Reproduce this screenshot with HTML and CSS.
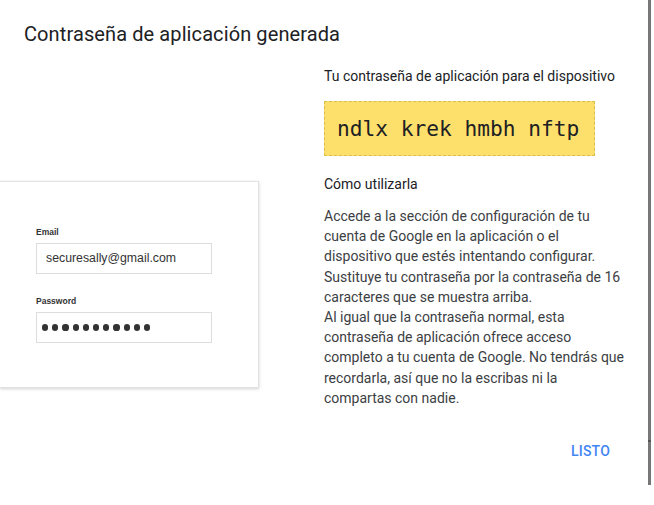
FILE: index.html
```html
<!DOCTYPE html>
<html lang="es">
<head>
<meta charset="utf-8">
<link rel="stylesheet" href="styles.css">
</head>
<body>
<div class="page">
  <div class="dialog">
    <h1 class="title">Contraseña de aplicación generada</h1>
    <div class="content">
      <div class="left">
        <div class="card">
          <div class="label">Email</div>
          <div class="field">securesally@gmail.com</div>
          <div class="label label-pw">Password</div>
          <div class="field dots" aria-label="contraseña oculta">
            <i></i><i></i><i></i><i></i><i></i><i></i><i></i><i></i><i></i><i></i><i></i>
          </div>
        </div>
      </div>
      <div class="right">
        <div class="subhead">Tu contraseña de aplicación para el dispositivo</div>
        <div class="pw">ndlx krek hmbh nftp</div>
        <div class="how">Cómo utilizarla</div>
        <p class="desc">Accede a la sección de configuración de tu<br>cuenta de Google en la aplicación o el<br>dispositivo que estés intentando configurar.<br>Sustituye tu contraseña por la contraseña de 16<br>caracteres que se muestra arriba.<br>Al igual que la contraseña normal, esta<br>contraseña de aplicación ofrece acceso<br>completo a tu cuenta de Google. No tendrás que<br>recordarla, así que no la escribas ni la<br>compartas con nadie.</p>
      </div>
    </div>
    <div class="actions"><span class="btn">LISTO</span></div>
  </div>
  <div class="scroll"><div class="tick"></div></div>
</div>
</body>
</html>
```
FILE: styles.css
```css
html, body { margin: 0; padding: 0; background: #fff; }
body { font-family: Roboto, "Noto Sans", sans-serif; }
.page { display: flex; align-items: flex-start; }
.dialog { width: 648px; height: 485px; box-sizing: border-box; display: flex; flex-direction: column; }
.title { margin: 0; padding: 22px 0 0 24px; font-size: 20px; line-height: 24px; font-weight: 400; color: #202124; letter-spacing: 0.1px; }
.content { display: flex; margin-top: 21px; }
.left { width: 258px; flex: none; padding-top: 114px; }
.card { box-sizing: border-box; width: 259px; height: 207px; border: 1px solid #e2e2e2; border-left: none; box-shadow: 0 1px 3px rgba(0,0,0,0.18); padding: 45px 0 0 36px; font-family: "Liberation Sans", Arial, sans-serif; }
.label { font-size: 8.5px; font-weight: 700; color: #333; line-height: 10px; }
.label-pw { margin-top: 22px; }
.field { box-sizing: border-box; width: 176px; height: 31px; margin-top: 6px; border: 1px solid #ddd; padding-left: 9px; font-size: 12.3px; line-height: 29px; color: #333; }
.dots { display: flex; align-items: center; gap: 4px; padding-left: 5px; }
.dots i { width: 6.2px; height: 6.2px; border-radius: 50%; background: #333; flex: none; }
.right { margin-left: 66px; width: 318px; }
.subhead { font-size: 14px; line-height: 18px; color: #202124; }
.pw { box-sizing: border-box; width: 271px; height: 55px; margin-top: 16px; background: #fde06b; border: 1px dashed #d9be4f; font-family: "DejaVu Sans Mono", monospace; font-size: 21.2px; line-height: 53px; color: #202124; padding-left: 12px; }
.how { margin-top: 19px; font-size: 14px; line-height: 18px; color: #202124; }
.desc { margin: 13px 0 0; font-size: 14px; line-height: 20.2px; color: #3c4043; white-space: nowrap; }
.actions { margin-top: auto; display: flex; justify-content: flex-end; padding: 0 38px 26px 0; }
.btn { color: #4285f4; font-weight: 500; font-size: 14px; letter-spacing: 0.2px; }
.scroll { width: 3px; height: 485px; background: #777; display: flex; flex-direction: column; justify-content: flex-end; }
.tick { height: 2px; background: #555; margin-bottom: 43px; }
```
